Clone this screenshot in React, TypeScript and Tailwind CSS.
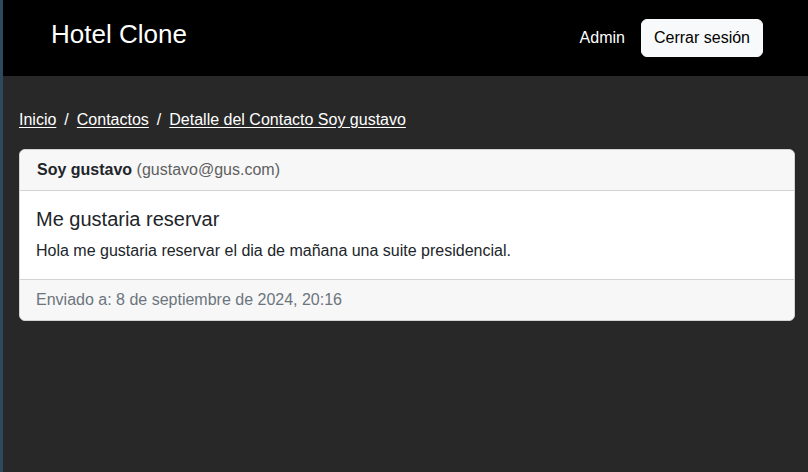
import React from "react";

const crumbs = ["Inicio", "Contactos", "Detalle del Contacto Soy gustavo"];

const Header = () => {
  return (
    <header className="h-[76px] bg-black flex items-center justify-between pl-12 pr-[45px]">
      <span className="text-white text-[26px] leading-none pb-2">Hotel Clone</span>
      <div className="flex items-center gap-4">
        <a className="text-white text-base">Admin</a>
        <button className="bg-[#f8f9fa] text-black text-base leading-6 px-3 py-[6px] rounded-md border border-[#f8f9fa]">
          Cerrar sesión
        </button>
      </div>
    </header>
  );
};

const App = () => {
  return (
    <div
      className="flex min-h-screen bg-[#282828]"
      style={{ fontFamily: '"Liberation Sans", Arial, sans-serif' }}
    >
      <div className="w-[3px] shrink-0 bg-[#2d4a5c]" />
      <div className="flex-1 flex flex-col">
        <Header />
        <main className="pt-8 pl-4 pr-[13px]">
          <nav className="flex items-center text-base leading-6 text-white">
            {crumbs.map((c, i) => (
              <React.Fragment key={c}>
                {i > 0 && <span className="px-2">/</span>}
                <a className="underline underline-offset-2">{c}</a>
              </React.Fragment>
            ))}
          </nav>

          <div className="mt-[17px] bg-white border border-[#d3d3d3] rounded-md overflow-hidden">
            <div className="bg-[#f7f7f7] border-b border-[#d3d3d3] px-4 py-2 text-base leading-6">
              <span className="font-bold text-[#212529] pl-[1px]">Soy gustavo</span>{" "}
              <span className="text-[#5f5f5f]">(gustavo@gus.com)</span>
            </div>
            <div className="p-4">
              <h5 className="text-xl leading-6 text-[#212529] mb-2">Me gustaria reservar</h5>
              <p className="text-base leading-6 text-[#212529]">
                Hola me gustaria reservar el dia de mañana una suite presidencial.
              </p>
            </div>
            <div className="bg-[#f7f7f7] border-t border-[#d3d3d3] px-4 py-2 text-base leading-6 text-[#6c757d]">
              Enviado a: 8 de septiembre de 2024, 20:16
            </div>
          </div>
        </main>
      </div>
    </div>
  );
};

export default App;
